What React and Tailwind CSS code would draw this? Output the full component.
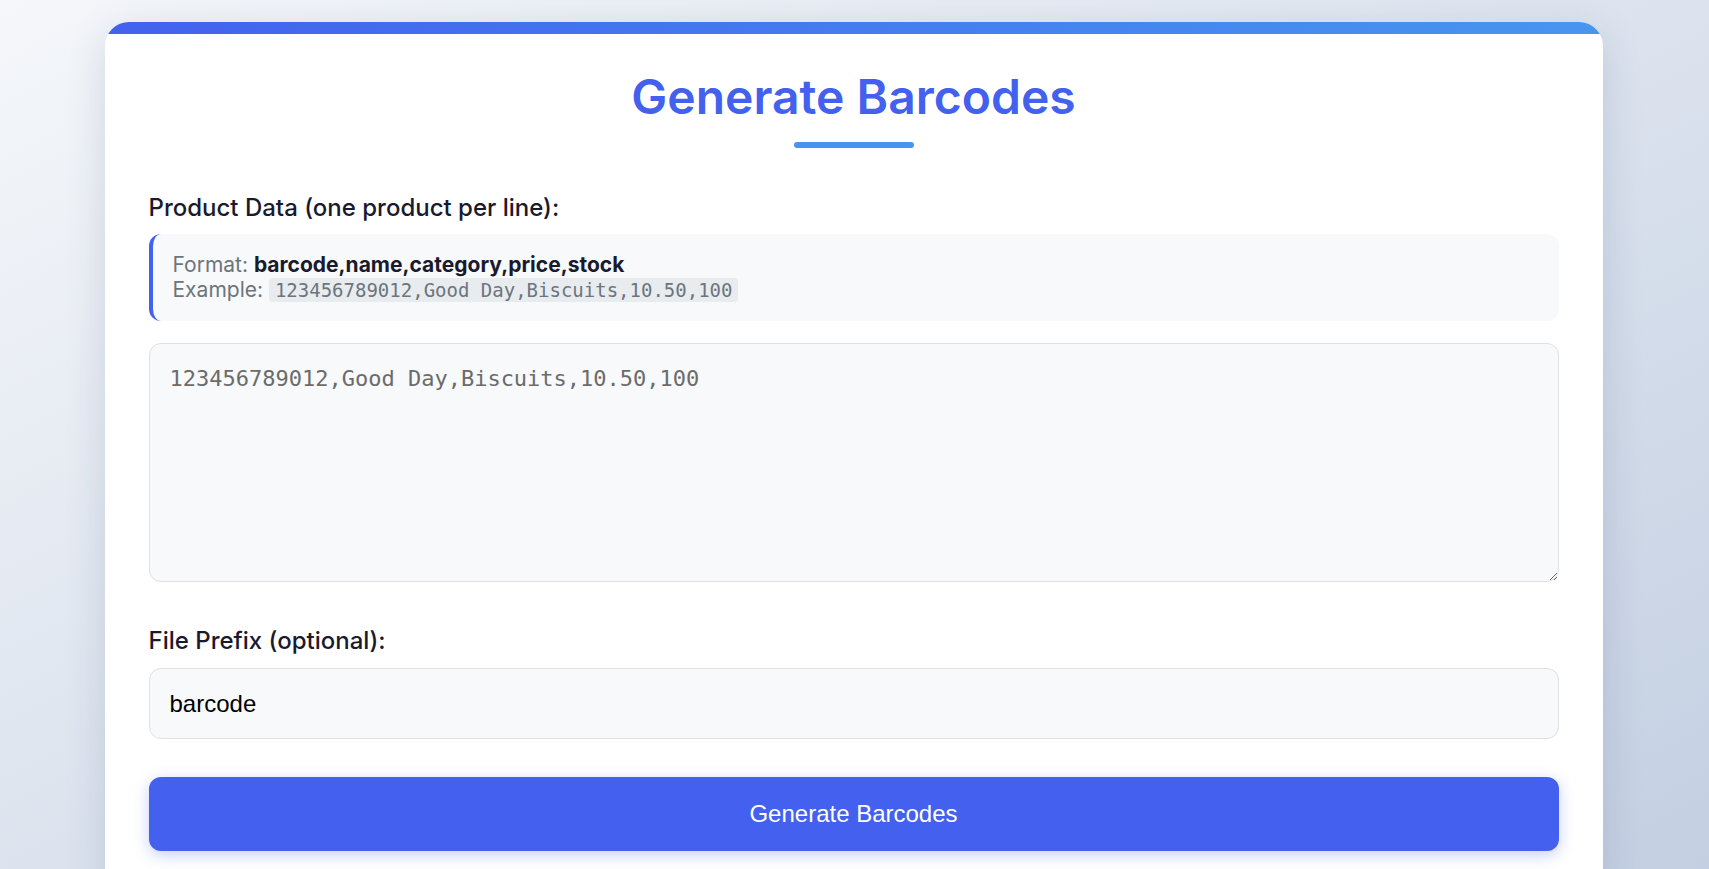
import React, { useState } from 'react';

const App = () => {
  const [prefix, setPrefix] = useState('barcode');
  const [data, setData] = useState('');

  return (
    <div className="min-h-screen bg-gradient-to-br from-[#f5f7fa] to-[#c3cfe2] pt-[22px] font-['Inter',sans-serif]">
      <div className="mx-auto w-[1498px] -translate-x-[1px] overflow-hidden rounded-[24px] bg-white shadow-[0_10px_40px_rgba(30,50,100,0.15)]">
        <div className="h-[12px] bg-gradient-to-r from-[#4361ee] to-[#4895ef]" />
        <div className="px-[44px] pt-[33px] pb-[40px]">
          <div className="flex flex-col items-center">
            <h1 className="text-[48px] leading-[60px] font-semibold text-[#4361ee]">Generate Barcodes</h1>
            <div className="mt-[15px] h-[6px] w-[120px] rounded-full bg-[#4895ef]" />
          </div>

          <div className="mt-[43px]">
            <label className="block text-[24px] leading-[34px] font-medium text-[#1a1a2e]">
              Product Data (one product per line):
            </label>
            <div className="mt-[9px] rounded-[12px] border-l-4 border-[#4361ee] bg-[#f8f9fa] px-[20px] py-[18px] text-[21px] leading-[25px] text-[#6c757d]">
              <div>
                Format: <strong className="font-bold text-[#1a1a2e]">barcode,name,category,price,stock</strong>
              </div>
              <div>
                Example:{' '}
                <code className="rounded-[4px] bg-[#e9ecef] px-[6px] py-[1px] font-['DejaVu_Sans_Mono',monospace] text-[19px]">
                  123456789012,Good Day,Biscuits,10.50,100
                </code>
              </div>
            </div>
            <textarea
              value={data}
              onChange={(e) => setData(e.target.value)}
              placeholder="123456789012,Good Day,Biscuits,10.50,100"
              className="mt-[22px] block h-[239px] w-full rounded-[12px] border-[1.5px] border-[#e0e0e0] bg-[#f8f9fa] px-[20px] py-[18px] font-['DejaVu_Sans_Mono',monospace] text-[22px] leading-[33px] text-[#333] placeholder:text-[#6b6b6b] outline-none"
            />
          </div>

          <div className="mt-[42px]">
            <label className="block text-[24px] leading-[34px] font-medium text-[#1a1a2e]">File Prefix (optional):</label>
            <input
              value={prefix}
              onChange={(e) => setPrefix(e.target.value)}
              className="mt-[10px] block h-[71px] w-full rounded-[12px] border-[1.5px] border-[#e0e0e0] bg-[#f8f9fa] px-[20px] font-['Liberation_Sans',Arial,sans-serif] text-[24px] text-black outline-none"
            />
          </div>

          <button className="mt-[38px] block h-[74px] w-full rounded-[12px] bg-[#4361ee] font-['Liberation_Sans',Arial,sans-serif] text-[24px] text-white shadow-[0_4px_15px_rgba(67,97,238,0.3)]">
            Generate Barcodes
          </button>
        </div>
      </div>
    </div>
  );
};

export default App;
